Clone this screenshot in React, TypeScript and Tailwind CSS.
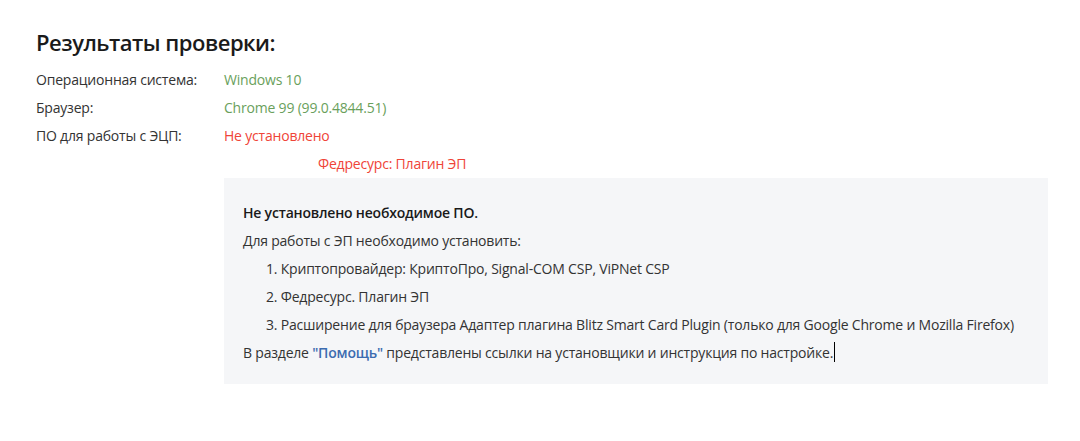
const rows = [
  { label: "Операционная система:", value: "Windows 10", ok: true },
  { label: "Браузер:", value: "Chrome 99 (99.0.4844.51)", ok: true },
  { label: "ПО для работы с ЭЦП:", value: "Не установлено", ok: false },
]

const steps = [
  "Криптопровайдер: КриптоПро, Signal-COM CSP, ViPNet CSP",
  "Федресурс. Плагин ЭП",
  "Расширение для браузера Адаптер плагина Blitz Smart Card Plugin (только для Google Chrome и Mozilla Firefox)",
]

export default function App() {
  return (
    <div className="min-h-[441px] w-[1080px] bg-white pl-[36px] pt-[27px] font-['Open_Sans',sans-serif] text-[14px] tracking-[-0.2px] text-[#333]">
      {/* HEADER */}
      <h1 className="text-[22px] leading-[30px] font-semibold tracking-[-0.5px] text-[#1a1a1a]">Результаты проверки:</h1>

      {/* CHECK RESULTS */}
      <div className="mt-[8px]">
        {rows.map((r) => (
          <div key={r.label} className="flex h-[28px] items-center">
            <div className="w-[188px]">{r.label}</div>
            <div className={r.ok ? "text-[#6a9f5c]" : "text-[#ef4438]"}>{r.value}</div>
          </div>
        ))}
        <div className="flex h-[29px] items-center pl-[282px] text-[#ef4438]">Федресурс: Плагин ЭП</div>
      </div>

      {/* MESSAGE BOX */}
      <div className="ml-[188px] w-[824px] bg-[#f5f6f8] pl-[19px] pt-[20px] pb-[18px] text-[#333]">
        <div className="flex h-[28px] items-center font-semibold text-[#1a1a1a]">Не установлено необходимое ПО.</div>
        <div className="flex h-[28px] items-center">Для работы с ЭП необходимо установить:</div>
        <ol className="pl-[23px]">
          {steps.map((s, i) => (
            <li key={s} className="flex h-[28px] items-center">
              {i + 1}. {s}
            </li>
          ))}
        </ol>
        <div className="flex h-[28px] items-center">
          В разделе&nbsp;<span className="font-semibold text-[#3c6cb0]">"Помощь"</span>&nbsp;представлены ссылки на установщики и инструкция по настройке.
          <span className="ml-px inline-block h-[20px] w-px bg-black" />
        </div>
      </div>
    </div>
  )
}
